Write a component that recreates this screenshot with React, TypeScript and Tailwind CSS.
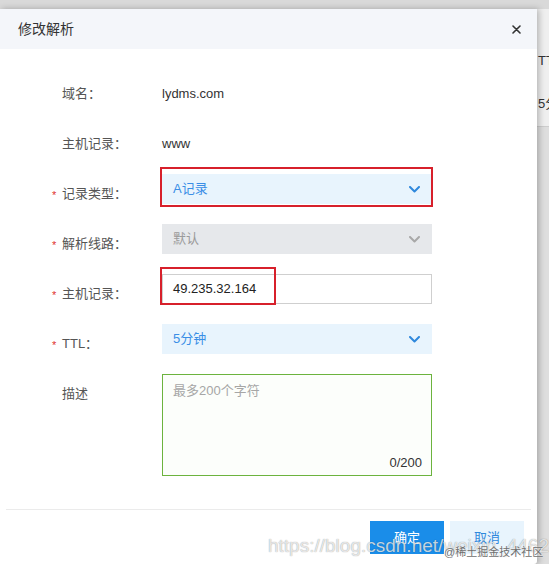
import React from "react";

const font = "font-['Liberation_Sans','Noto_Sans_CJK_SC',sans-serif]";

function Chevron({ color }: { color: string }) {
  return (
    <svg width="11" height="7" viewBox="0 0 11 7" fill="none">
      <path d="M1 1l4.5 4.5L10 1" stroke={color} strokeWidth="2" strokeLinecap="round" strokeLinejoin="round" />
    </svg>
  );
}

function Label({ text, required }: { text: string; required?: boolean }) {
  return (
    <div className="relative w-[100px] shrink-0 pt-[10px] text-[13px] leading-5 text-[#555]">
      {required && <span className="absolute -left-[10px] top-[11px] text-[11px] text-[#e0322f]">*</span>}
      {text}
    </div>
  );
}

function Select({ value, disabled, marked }: { value: string; disabled?: boolean; marked?: boolean }) {
  return (
    <div
      className={`relative flex h-[30px] w-[270px] items-center justify-between pl-[11px] pr-[12px] text-[13px] ${
        disabled ? "bg-[#e6e8eb] text-[#9a9a9a]" : "bg-[#e8f4fd] text-[#3a8ee6]"
      }`}
    >
      <span>{value}</span>
      <Chevron color={disabled ? "#a8a8a8" : "#2f88dc"} />
      {marked && <div className="absolute -left-[2px] -right-[1px] -top-[7px] -bottom-[3px] border-2 border-[#d7202b]" />}
    </div>
  );
}

export default function App() {
  return (
    <div className={`relative flex h-[564px] w-[549px] flex-col overflow-hidden bg-[#d9d9d9] ${font}`}>
      <div className="h-[9px] shrink-0" />
      <div className="flex flex-1">
        {/* dialog */}
        <div className="relative flex w-[537px] shrink-0 flex-col rounded-br-[3px] bg-white shadow-[2px_0_6px_rgba(0,0,0,0.25)]">
          <div className="flex h-[40px] items-center justify-between bg-[#f4f6fa] pl-[18px] pr-[16px]">
            <span className="text-[14px] text-[#333]">修改解析</span>
            <svg width="9" height="9" viewBox="0 0 9 9">
              <path d="M1 1l7 7M8 1L1 8" stroke="#333" strokeWidth="1.6" strokeLinecap="round" />
            </svg>
          </div>

          <div className="flex flex-col gap-[20px] pl-[62px] pt-[25px]">
            <div className="flex h-[30px]">
              <Label text="域名：" />
              <div className="pt-[10px] text-[13px] leading-5 text-[#333]">lydms.com</div>
            </div>
            <div className="flex h-[30px]">
              <Label text="主机记录：" />
              <div className="pt-[10px] text-[13px] leading-5 text-[#333]">www</div>
            </div>
            <div className="flex h-[30px]">
              <Label text="记录类型：" required />
              <Select value="A记录" marked />
            </div>
            <div className="flex h-[30px]">
              <Label text="解析线路：" required />
              <Select value="默认" disabled />
            </div>
            <div className="flex h-[30px]">
              <Label text="主机记录：" required />
              <div className="relative flex h-[30px] w-[270px] items-center border border-[#cfcfcf] pl-[10px] text-[13px] text-[#222]">
                49.235.32.164
                <div className="absolute -left-[3px] -top-[8px] -bottom-[2px] w-[116px] border-2 border-[#d7202b]" />
              </div>
            </div>
            <div className="flex h-[30px]">
              <Label text="TTL：" required />
              <Select value="5分钟" />
            </div>
            <div className="flex">
              <Label text="描述" />
              <div className="relative h-[102px] w-[270px] border border-[#6cb33e] bg-[#fcfefb] pl-[10px] pt-[6px] text-[13px] text-[#a6a6a6]">
                最多200个字符
                <span className="absolute bottom-[3px] right-[9px] text-[#333]">0/200</span>
              </div>
            </div>
          </div>

          <div className="mx-[6px] mt-[33px] border-t border-[#ebebeb]" />
          <div className="flex justify-end gap-[6px] pr-[13px] pt-[11px]">
            <div className="flex h-[33px] w-[74px] items-center justify-center bg-[#1a8de9] text-[13px] text-white">确定</div>
            <div className="flex h-[33px] w-[74px] items-center justify-center bg-[#e8f4fd] text-[13px] text-[#2f88dc]">取消</div>
          </div>
        </div>

        {/* page behind the dialog */}
        <div className="flex flex-1 flex-col overflow-hidden whitespace-nowrap text-[13px] text-[#333]">
          <div className="flex h-[118px] shrink-0 flex-col border-b border-[#cdcdcd] bg-[#efefef] pl-[1px]">
            <span className="mt-[42px]">TTL</span>
            <span className="mt-[23px]">5分钟</span>
          </div>
          <div className="flex-1 bg-[#dedede]" />
        </div>
      </div>

      {/* watermarks */}
      <div className="pointer-events-none absolute left-[268px] top-[532px] whitespace-nowrap text-[19px] text-white/75 [text-shadow:0_0_1px_rgba(0,0,0,0.45)]">
        https://blog.csdn.net/weixin_44624117
      </div>
      <div className="pointer-events-none absolute left-[444px] top-[544px] whitespace-nowrap text-[11px] text-[#6f6f6f] [text-shadow:0_0_2px_#fff]">
        @稀土掘金技术社区
      </div>
    </div>
  );
}
